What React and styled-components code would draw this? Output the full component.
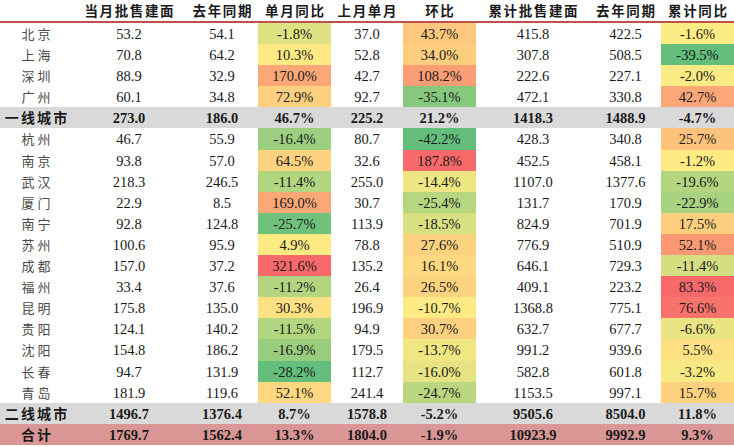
import React from "react";
import styled, { createGlobalStyle } from "styled-components";

const GlobalStyle = createGlobalStyle`
  html, body { margin: 0; padding: 0; background: #fff; }
  body {
    font-family: "Liberation Serif", "Noto Sans CJK SC", serif;
    color: #1a1a1a;
  }
`;

const COLS = "72px 114px 72px 73px 72px 73px 114px 71px 73px";

const HEADERS = ["", "当月批售建面", "去年同期", "单月同比", "上月单月", "环比", "累计批售建面", "去年同期", "累计同比"];

// name, 当月, 去年同期, 单月同比, 上月单月, 环比, 累计, 去年同期, 累计同比
const ROWS = [
  ["北京", "53.2", "54.1", "-1.8%", "37.0", "43.7%", "415.8", "422.5", "-1.6%"],
  ["上海", "70.8", "64.2", "10.3%", "52.8", "34.0%", "307.8", "508.5", "-39.5%"],
  ["深圳", "88.9", "32.9", "170.0%", "42.7", "108.2%", "222.6", "227.1", "-2.0%"],
  ["广州", "60.1", "34.8", "72.9%", "92.7", "-35.1%", "472.1", "330.8", "42.7%"],
  ["一线城市", "273.0", "186.0", "46.7%", "225.2", "21.2%", "1418.3", "1488.9", "-4.7%", "tier"],
  ["杭州", "46.7", "55.9", "-16.4%", "80.7", "-42.2%", "428.3", "340.8", "25.7%"],
  ["南京", "93.8", "57.0", "64.5%", "32.6", "187.8%", "452.5", "458.1", "-1.2%"],
  ["武汉", "218.3", "246.5", "-11.4%", "255.0", "-14.4%", "1107.0", "1377.6", "-19.6%"],
  ["厦门", "22.9", "8.5", "169.0%", "30.7", "-25.4%", "131.7", "170.9", "-22.9%"],
  ["南宁", "92.8", "124.8", "-25.7%", "113.9", "-18.5%", "824.9", "701.9", "17.5%"],
  ["苏州", "100.6", "95.9", "4.9%", "78.8", "27.6%", "776.9", "510.9", "52.1%"],
  ["成都", "157.0", "37.2", "321.6%", "135.2", "16.1%", "646.1", "729.3", "-11.4%"],
  ["福州", "33.4", "37.6", "-11.2%", "26.4", "26.5%", "409.1", "223.2", "83.3%"],
  ["昆明", "175.8", "135.0", "30.3%", "196.9", "-10.7%", "1368.8", "775.1", "76.6%"],
  ["贵阳", "124.1", "140.2", "-11.5%", "94.9", "30.7%", "632.7", "677.7", "-6.6%"],
  ["沈阳", "154.8", "186.2", "-16.9%", "179.5", "-13.7%", "991.2", "939.6", "5.5%"],
  ["长春", "94.7", "131.9", "-28.2%", "112.7", "-16.0%", "582.8", "601.8", "-3.2%"],
  ["青岛", "181.9", "119.6", "52.1%", "241.4", "-24.7%", "1153.5", "997.1", "15.7%"],
  ["二线城市", "1496.7", "1376.4", "8.7%", "1578.8", "-5.2%", "9505.6", "8504.0", "11.8%", "tier"],
  ["合计", "1769.7", "1562.4", "13.3%", "1804.0", "-1.9%", "10923.9", "9992.9", "9.3%", "total"],
];

const HEAT_COLS = [3, 5, 8];

// excel style 3-colour scale: min green, 50th percentile yellow, max red
const GREEN = [99, 190, 123];
const YELLOW = [255, 235, 132];
const RED = [248, 105, 107];

function makeScale(values) {
  const sorted = [...values].sort((a, b) => a - b);
  const min = sorted[0];
  const max = sorted[sorted.length - 1];
  const pos = (sorted.length - 1) * 0.5;
  const lo = Math.floor(pos);
  const mid = sorted[lo] + (sorted[Math.ceil(pos)] - sorted[lo]) * (pos - lo);
  return (v) => {
    let a, b, t;
    if (v <= mid) {
      a = GREEN; b = YELLOW; t = (v - min) / (mid - min || 1);
    } else {
      a = YELLOW; b = RED; t = (v - mid) / (max - mid || 1);
    }
    return `rgb(${a.map((c, i) => Math.round(c + (b[i] - c) * t)).join(",")})`;
  };
}

const cityRows = ROWS.filter((r) => !r[9]);
const scales = {};
HEAT_COLS.forEach((ci) => {
  scales[ci] = makeScale(cityRows.map((r) => parseFloat(r[ci])));
});

const Table = styled.div`
  width: 734px;
  display: flex;
  flex-direction: column;
`;

const HeaderRow = styled.div`
  display: grid;
  grid-template-columns: ${COLS};
  height: 21px;
  border-bottom: 2px solid #c0504d;
`;

const HeadCell = styled.div`
  font-family: "Noto Sans CJK SC", sans-serif;
  font-weight: 700;
  font-size: 13.5px;
  letter-spacing: 1.6px;
  line-height: 21px;
  text-align: center;
  color: #1a1a1a;
  white-space: nowrap;
  padding-left: 1.6px;
`;

const ROW_BG = { city: "transparent", tier: "#d9d9d9", total: "#da9694" };

const Row = styled.div`
  display: grid;
  grid-template-columns: ${COLS};
  height: 21.1px;
  background: ${(p) => ROW_BG[p.$kind]};
  font-weight: ${(p) => (p.$kind === "city" ? 400 : 700)};
`;

const Cell = styled.div`
  font-size: 14.5px;
  line-height: 22px;
  text-align: center;
  white-space: nowrap;
`;

const NameCell = styled.div`
  font-family: "Noto Sans CJK SC", sans-serif;
  font-size: ${(p) => (p.$bold ? "14px" : "13px")};
  font-weight: ${(p) => (p.$bold ? 700 : 400)};
  letter-spacing: ${(p) => (p.$bold ? "2.2px" : "3px")};
  padding-left: ${(p) => (p.$bold ? "2.2px" : "3px")};
  color: ${(p) => (p.$bold ? "#1a1a1a" : "#4a4a4a")};
  line-height: 21.1px;
  text-align: center;
  white-space: nowrap;
`;

export default function App() {
  return (
    <>
      <GlobalStyle />
      <Table>
        <HeaderRow>
          {HEADERS.map((h, i) => (
            <HeadCell key={i}>{h}</HeadCell>
          ))}
        </HeaderRow>
        {ROWS.map((row) => {
          const kind = row[9] || "city";
          return (
            <Row key={row[0]} $kind={kind}>
              <NameCell $bold={kind !== "city"}>{row[0]}</NameCell>
              {row.slice(1, 9).map((v, i) => {
                const ci = i + 1;
                const heat = kind === "city" && scales[ci];
                return (
                  <Cell key={ci} style={heat ? { background: heat(parseFloat(v)) } : undefined}>
                    {v}
                  </Cell>
                );
              })}
            </Row>
          );
        })}
      </Table>
    </>
  );
}
